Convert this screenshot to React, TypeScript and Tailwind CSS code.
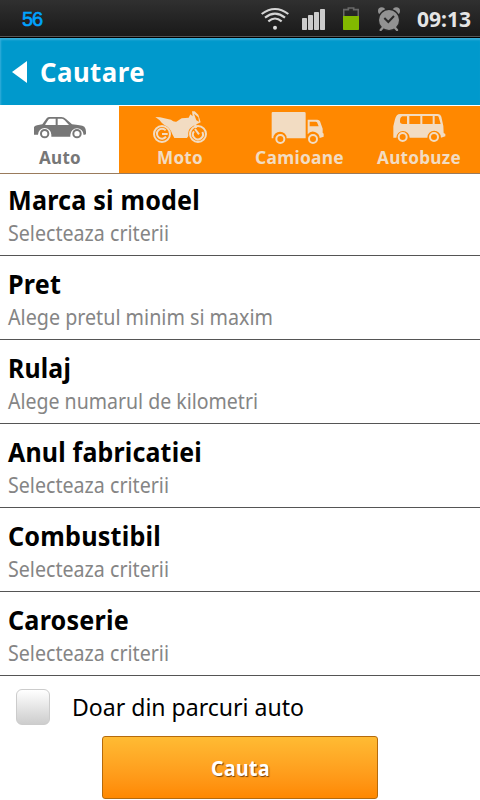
import type { ReactNode } from "react";

interface Criterion {
  title: string
  hint: string
  titleFit: string
  hintFit: string
}

interface TabProps {
  label: string
  fit: string
  active?: boolean
  children: ReactNode
}

const criteria: Criterion[] = [
  { title: "Marca si model", hint: "Selecteaza criterii", titleFit: "w-[192px]", hintFit: "w-[161px]" },
  { title: "Pret", hint: "Alege pretul minim si maxim", titleFit: "w-[53px]", hintFit: "w-[265px]" },
  { title: "Rulaj", hint: "Alege numarul de kilometri", titleFit: "w-[63px]", hintFit: "w-[250px]" },
  { title: "Anul fabricatiei", hint: "Selecteaza criterii", titleFit: "w-[194px]", hintFit: "w-[161px]" },
  { title: "Combustibil", hint: "Selecteaza criterii", titleFit: "w-[153px]", hintFit: "w-[161px]" },
  { title: "Caroserie", hint: "Selecteaza criterii", titleFit: "w-[121px]", hintFit: "w-[161px]" },
];

const StatusBar = () => {
  return (
    <div className="flex h-[38px] items-center border-b border-black bg-linear-to-b from-[#303030] to-[#191919] pt-px shadow-[inset_0_-1px_0_#555]">
      <span className="ml-[22px] w-[239px] font-['Liberation_Sans'] text-[20px] leading-none tracking-[-1px] text-[#00a2ff] [-webkit-text-stroke:0.6px_#00a2ff]">56</span>
      <svg className="h-6 w-7" viewBox="0 0 84 72" fill="none" stroke="#d5d5d5" strokeWidth="6.5">
        <path d="M2 21Q42-9 82 21" />
        <path d="M12 32Q42 8 72 32" />
        <path d="M22 43Q42 26 62 43" />
        <circle cx="42" cy="62" r="6" fill="#ddd" stroke="none" />
      </svg>
      <svg className="ml-[13px] h-6 w-6" viewBox="0 0 72 72" fill="#cbcbcb">
        <rect x="0" y="33" width="15" height="36" rx="2" />
        <rect x="18" y="24" width="15" height="45" rx="2" />
        <rect x="36" y="15" width="15" height="54" rx="2" />
        <rect x="54" y="6" width="15" height="63" rx="2" />
      </svg>
      <svg className="ml-[17px] h-6 w-4" viewBox="0 0 48 72">
        <path d="M2 28V8h14V3h16v5h14v20" fill="none" stroke="#686868" strokeWidth="5" />
        <path d="M0 27h48v40q0 2-2 2H2q-2 0-2-2z" fill="#82b900" />
      </svg>
      <svg className="ml-[18px] h-6 w-6" viewBox="0 0 72 72" fill="#929292">
        <circle cx="14" cy="12" r="11" />
        <circle cx="58" cy="12" r="11" />
        <circle cx="36" cy="39" r="34" fill="#262626" />
        <circle cx="36" cy="39" r="30" />
        <path d="M17 62l-6 7M54 62l6 7" stroke="#929292" strokeWidth="7" strokeLinecap="round" />
        <path d="M22 33l12 12 17-18" fill="none" stroke="#292929" strokeWidth="6" />
      </svg>
      <svg className="ml-4 h-6 w-[54px] overflow-visible" fill="#e5e5e5">
        <text x="0" y="20" textLength="100%" lengthAdjust="spacingAndGlyphs" className="text-[20.5px] font-bold">09:13</text>
      </svg>
    </div>
  )
}

const Tab = ({ label, fit, active, children }: TabProps) => {
  return (
    <div className={`flex flex-col items-center pt-[5px] ${active ? "bg-white text-[#777]" : "bg-[#ff8800] text-[#f2dcc2]"}`}>
      <svg className="h-[34px] w-[60px] shrink-0" viewBox="90 33 180 102" fill="currentColor">
        {children}
      </svg>
      <svg className={`mt-0.5 h-6 shrink-0 overflow-visible ${fit}`} fill="currentColor">
        <text x="0" y="17" textLength="100%" lengthAdjust="spacingAndGlyphs" className="text-[18px] font-bold tracking-[0.3px]">{label}</text>
      </svg>
    </div>
  )
}

const Tabs = () => {
  return (
    <div className="grid h-[69px] grid-cols-[119px_122px_116px_123px] border-t border-b border-t-white border-b-[#9a7b5c] bg-white">
      <Tab label="Auto" fit="w-[42px]" active>
        <path fillRule="evenodd" d="M102 82Q103 78 111 76L127 73 140 55Q143 51 149 51H184Q192 51 198 57L216 73Q243 75 253 80 258 86 258 95V103L251 105A20 20 0 0 0 211 105V110H154V104A20 20 0 0 0 114 104H102ZM136 73L145 59Q146 56 151 56H167V75H136ZM173 56H186Q190 56 194 61L207 75H173Z" />
        <g fill="white" stroke="currentColor" strokeWidth="6">
          <circle cx="134" cy="101" r="11" />
          <circle cx="231" cy="101" r="11" />
        </g>
      </Tab>
      <Tab label="Moto" fit="w-[46px]">
        <g fill="none" stroke="currentColor">
          <circle cx="126" cy="102" r="24" strokeWidth="6" />
          <circle cx="234" cy="102" r="24" strokeWidth="6" />
          <path d="M143 102H126M137 91A15 15 0 1 0 138 110M225 87L237 103M247 96A15 15 0 1 1 222 94" strokeWidth="6" />
          <path d="M222 58L228 84" strokeWidth="7" />
        </g>
        <path d="M106 51L120 52 153 59Q160 66 169 65L185 55 206 53 211 43 218 49 216 34 224 34 235 44 242 67 223 76 214 82Q203 89 205 108L201 114H163L157 103Q151 82 133 75L125 68 119 61Z" />
        <path d="M222 41L235 52 237 65 229 61Z" fill="#ff8800" />
      </Tab>
      <Tab label="Camioane" fit="w-[89px]">
        <g transform="translate(2 0)">
          <path fillRule="evenodd" d="M99 36H194Q198 36 198 40V115H141A20 20 0 0 0 101 115H96V39Q96 36 99 36ZM204 59H233Q239 59 241 64L249 86V98L252 101V110L240 114A20 20 0 0 0 204 103ZM210 65V79H237L232 67Q231 65 228 65Z" />
          <g fill="none" stroke="currentColor" strokeWidth="6">
            <circle cx="122" cy="117" r="12" />
            <circle cx="220" cy="117" r="12" />
          </g>
        </g>
      </Tab>
      <Tab label="Autobuze" fit="w-[84px]">
        <g transform="translate(4 0)">
          <path fillRule="evenodd" d="M119 42H233Q241 42 243 50L249 78 250 99 255 102V109L242 113A20 20 0 0 0 201 113H148A20 20 0 0 0 108 113H99V79L104 58Q108 42 119 42ZM126 49Q118 51 119 67 121 72 127 72H140V49ZM147 48V72H180V48ZM186 48V72H217V48ZM223 48V72H241L235 51Q234 48 231 48Z" />
          <g fill="none" stroke="currentColor" strokeWidth="6">
            <circle cx="127" cy="111" r="12" />
            <circle cx="221" cy="111" r="12" />
          </g>
        </g>
      </Tab>
    </div>
  )
}

const CriterionRow = ({ title, hint, titleFit, hintFit }: Criterion) => {
  return (
    <div className="flex h-[84px] flex-col justify-end border-b border-[#555] pl-2 first:h-[82px]">
      <svg className={`h-9 overflow-visible ${titleFit}`}>
        <text x="0" y="28" textLength="100%" lengthAdjust="spacingAndGlyphs" className="text-[26.5px] font-bold tracking-[0.2px]">{title}</text>
      </svg>
      <svg className={`h-[37px] overflow-visible ${hintFit}`}>
        <text x="0" y="23" textLength="100%" lengthAdjust="spacingAndGlyphs" className="fill-[#858585] text-[22px]">{hint}</text>
      </svg>
    </div>
  )
}

const App = () => {
  return (
    <div className="h-[800px] w-[480px] overflow-hidden bg-white font-['Noto_Sans','Open_Sans',sans-serif] text-black">
      <StatusBar />
      <header className="flex h-[67px] items-center bg-[#0099cc] pl-3 text-white shadow-[inset_1px_2px_2px_#35aeda]">
        <svg className="h-[22px] w-[15px]" viewBox="0 0 15 22" fill="currentColor">
          <path d="M0 11L15 0V22Z" />
        </svg>
        <svg className="ml-[13px] h-8 w-[105px] overflow-visible" fill="currentColor">
          <text x="0" y="26" textLength="100%" lengthAdjust="spacingAndGlyphs" className="text-[26px] font-bold tracking-[0.5px]">Cautare</text>
        </svg>
      </header>
      <Tabs />
      <main>
        {criteria.map((item) => (
          <CriterionRow key={item.title} {...item} />
        ))}
      </main>
      <label className="flex h-[60px] items-center pt-0.5 pl-4">
        <span className="h-9 w-[34px] rounded-md border border-[#ccc] bg-linear-to-b from-white to-[#cdcdcd]" />
        <svg className="ml-[22px] h-9 w-[232px] overflow-visible">
          <text x="0" y="27" textLength="100%" lengthAdjust="spacingAndGlyphs" className="text-[23.5px]">Doar din parcuri auto</text>
        </svg>
      </label>
      <button className="mx-auto flex h-[63px] w-[276px] items-center justify-center rounded-[3px] border border-[#b56a0c] bg-linear-to-b from-[#ffbb33] to-[#ff8800] text-white">
        <svg className="h-8 w-[59px] overflow-visible [text-shadow:1px_1px_1px_#77400a]" fill="currentColor">
          <text x="0" y="24" textLength="100%" lengthAdjust="spacingAndGlyphs" className="text-[20.5px] font-bold tracking-[0.4px]">Cauta</text>
        </svg>
      </button>
    </div>
  )
}

export default App
